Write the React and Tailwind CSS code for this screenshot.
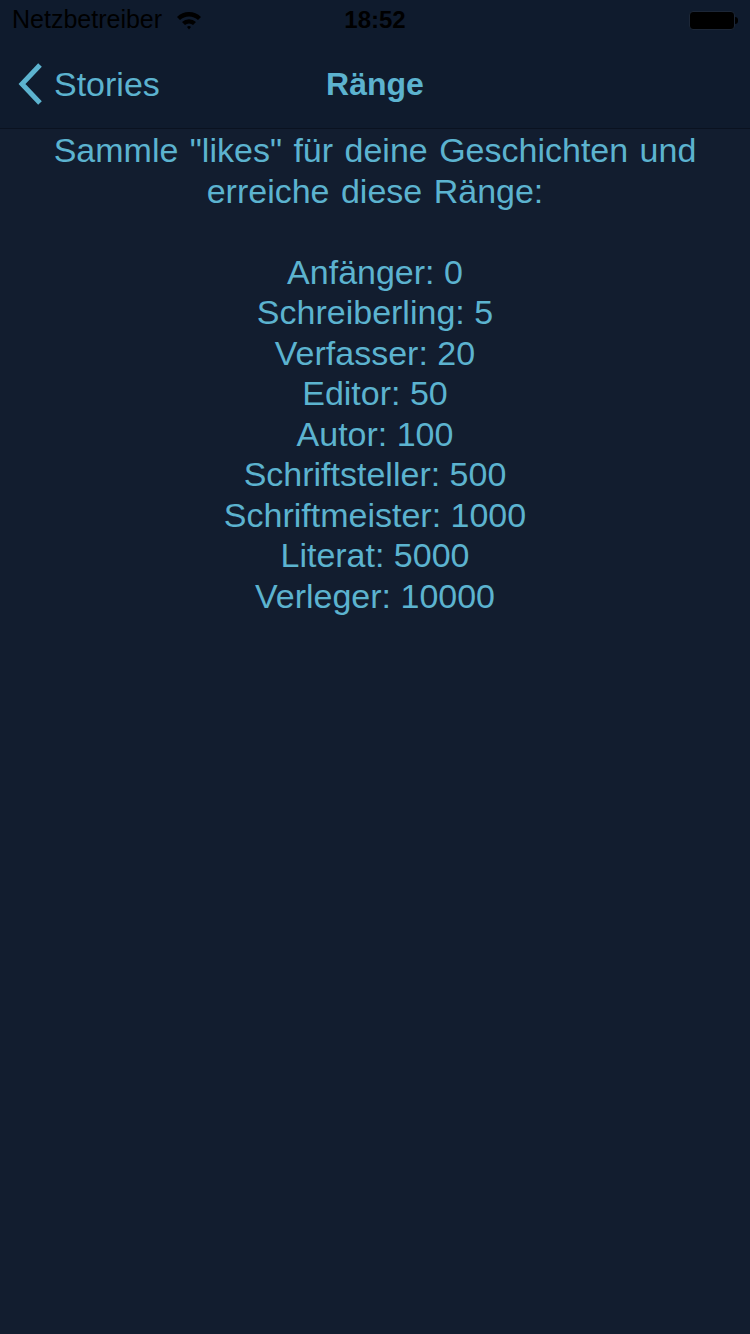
import React from 'react';

const ranks = [
  'Anfänger: 0',
  'Schreiberling: 5',
  'Verfasser: 20',
  'Editor: 50',
  'Autor: 100',
  'Schriftsteller: 500',
  'Schriftmeister: 1000',
  'Literat: 5000',
  'Verleger: 10000',
];

export default function App() {
  return (
    <div
      className="w-[750px] h-[1334px] bg-[#121d2f] flex flex-col"
      style={{ fontFamily: '"Liberation Sans", Arial, sans-serif' }}
    >
      <div className="bg-[#0f1b2d] border-b border-[#0a1220]">
        {/* status bar */}
        <div className="h-[40px] flex items-center px-3 relative">
          <div className="flex items-center gap-[14px] text-[25px] text-black">
            <span>Netzbetreiber</span>
            <svg width="26" height="20" viewBox="0 0 26 20">
              <path d="M1 7 A17 17 0 0 1 25 7 L22 10 A13 13 0 0 0 4 10 Z" fill="#000" />
              <path d="M6 12 A10 10 0 0 1 20 12 L17 15 A6 6 0 0 0 9 15 Z" fill="#000" />
              <path d="M11 17 A3 3 0 0 1 15 17 L13 19.5 Z" fill="#000" />
            </svg>
          </div>
          <div className="absolute left-0 right-0 text-center text-[24px] font-bold text-black pointer-events-none">
            18:52
          </div>
          <div className="ml-auto flex items-center mr-[0px]">
            <div className="w-[46px] h-[19px] rounded-[4px] border border-[#1c2636] bg-black" />
            <div className="w-[3px] h-[7px] bg-black rounded-r-sm" />
          </div>
        </div>
        {/* nav bar */}
        <div className="h-[88px] flex items-center relative">
          <div className="flex items-center pl-[16px] text-[#5cb3cf]">
            <svg width="28" height="44" viewBox="0 0 28 44">
              <path d="M24 3 L6 22 L24 41" stroke="#5cb3cf" strokeWidth="5" fill="none" />
            </svg>
            <span className="ml-[10px] text-[34px]">Stories</span>
          </div>
          <div className="absolute left-0 right-0 text-center text-[32px] font-bold text-[#5cb3cf]">
            Ränge
          </div>
        </div>
      </div>
      <div className="flex flex-col items-center text-center text-[#5cb3cf] text-[34px] leading-[40.5px] pt-[1px]">
        <p className="[word-spacing:2px]">Sammle "likes" für deine Geschichten und</p>
        <p className="[word-spacing:2px]">erreiche diese Ränge:</p>
        <div className="mt-[40.5px] flex flex-col items-center">
          {ranks.map((r) => (
            <p key={r}>{r}</p>
          ))}
        </div>
      </div>
    </div>
  );
}
